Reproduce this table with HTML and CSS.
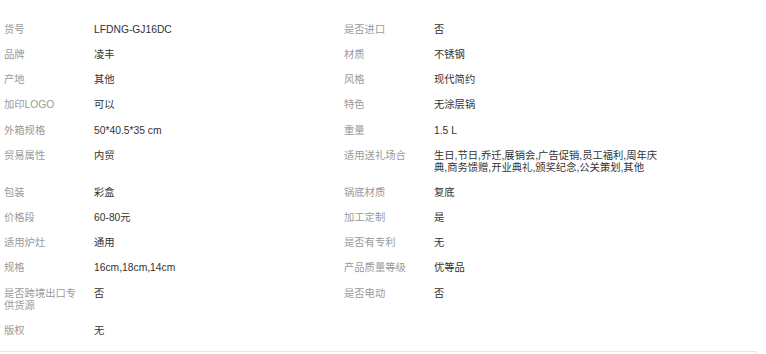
FILE: index.html
```html
<!DOCTYPE html>
<html lang="zh-CN">
<head>
<meta charset="utf-8">
<title>商品属性</title>
<link rel="stylesheet" href="styles.css">
</head>
<body>
<div class="attrs">
  <div class="grid">
    <div class="k">货号</div><div class="v">LFDNG-GJ16DC</div>
    <div class="k">是否进口</div><div class="v">否</div>

    <div class="k">品牌</div><div class="v">凌丰</div>
    <div class="k">材质</div><div class="v">不锈钢</div>

    <div class="k">产地</div><div class="v">其他</div>
    <div class="k">风格</div><div class="v">现代简约</div>

    <div class="k">加印LOGO</div><div class="v">可以</div>
    <div class="k">特色</div><div class="v">无涂层锅</div>

    <div class="k">外箱规格</div><div class="v">50*40.5*35 cm</div>
    <div class="k">重量</div><div class="v">1.5 L</div>

    <div class="k">贸易属性</div><div class="v">内贸</div>
    <div class="k">适用送礼场合</div><div class="v">生日,节日,乔迁,展销会,广告促销,员工福利,周年庆典,商务馈赠,开业典礼,颁奖纪念,公关策划,其他</div>

    <div class="k">包装</div><div class="v">彩盒</div>
    <div class="k">锅底材质</div><div class="v">复底</div>

    <div class="k">价格段</div><div class="v">60-80元</div>
    <div class="k">加工定制</div><div class="v">是</div>

    <div class="k">适用炉灶</div><div class="v">通用</div>
    <div class="k">是否有专利</div><div class="v">无</div>

    <div class="k">规格</div><div class="v">16cm,18cm,14cm</div>
    <div class="k">产品质量等级</div><div class="v">优等品</div>

    <div class="k">是否跨境出口专供货源</div><div class="v">否</div>
    <div class="k">是否电动</div><div class="v">否</div>

    <div class="k">版权</div><div class="v">无</div>
    <div class="k"></div><div class="v"></div>
  </div>
</div>
<div class="next"></div>
</body>
</html>
```

FILE: styles.css
```css
html, body {
  margin: 0;
  padding: 0;
  background: #fff;
}
body {
  font-family: "Liberation Sans", "Noto Sans CJK SC", sans-serif;
  font-size: 10.3px;
  color: #333;
}
.attrs {
  padding: 18px 0 7px 4px;
  width: 753px;
}
.grid {
  display: grid;
  grid-template-columns: 90px 250px 90px 250px;
}
.k, .v {
  padding: 6.2px 0 6.3px;
  line-height: 12.6px;
}
.k {
  color: #9a9a9a;
  padding-right: 12px;
}
.v {
  color: #333;
  padding-right: 17px;
}
.next {
  width: 756px;
  height: 10px;
  border-top: 1px solid #e6e6e6;
  border-right: 1px solid #e6e6e6;
}
```
